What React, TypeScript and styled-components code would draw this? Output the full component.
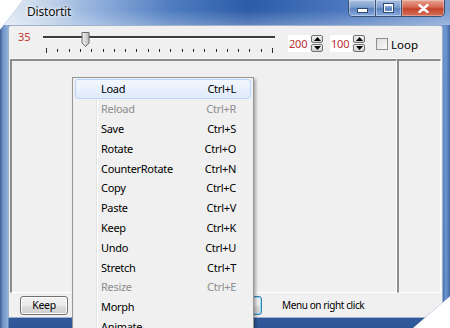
import React from 'react'
import styled, { createGlobalStyle } from 'styled-components'

const GlobalStyle = createGlobalStyle`
  html, body {
    margin: 0;
    padding: 0;
    background: #fff;
    overflow: hidden;
  }
  body {
    font-family: 'Noto Sans', 'Open Sans', sans-serif;
    font-size: 11px;
    color: #000;
  }
`

interface MenuEntry {
  label: string
  accel: string
  active?: boolean
  disabled?: boolean
}

const menu: MenuEntry[] = [
  { label: 'Load', accel: 'Ctrl+L', active: true },
  { label: 'Reload', accel: 'Ctrl+R', disabled: true },
  { label: 'Save', accel: 'Ctrl+S' },
  { label: 'Rotate', accel: 'Ctrl+O' },
  { label: 'CounterRotate', accel: 'Ctrl+N' },
  { label: 'Copy', accel: 'Ctrl+C' },
  { label: 'Paste', accel: 'Ctrl+V' },
  { label: 'Keep', accel: 'Ctrl+K' },
  { label: 'Undo', accel: 'Ctrl+U' },
  { label: 'Stretch', accel: 'Ctrl+T' },
  { label: 'Resize', accel: 'Ctrl+E', disabled: true },
  { label: 'Morph', accel: '' },
  { label: 'Animate', accel: '' },
]

function Slider({ value, max }: { value: number; max: number }) {
  const x0 = 6
  const x1 = 232
  const ticks = Array.from({ length: 21 }, (_, i) => x0 + ((x1 - x0) * i) / 20)
  const tx = x0 + ((x1 - x0) * value) / max
  return (
    <S.SliderSvg width="236" height="26" viewBox="0 0 236 26">
      <rect x="3" y="5" width="232" height="2" fill="#3c3c3c" />
      <rect x="3" y="7" width="232" height="1" fill="#ffffff" />
      {ticks.map((t, i) => (
        <rect
          key={i}
          x={Math.round(t)}
          y={i === 0 || i === 20 ? 17 : 18}
          width="1"
          height={i === 0 || i === 20 ? 5 : 3}
          fill="#2a2a2a"
        />
      ))}
      <defs>
        <linearGradient id="thumb" x1="0" y1="0" x2="1" y2="0">
          <stop offset="0" stopColor="#f4f4f4" />
          <stop offset="1" stopColor="#b9b9b9" />
        </linearGradient>
      </defs>
      <path
        d={`M${tx - 3.5} 1.5 H${tx + 3.5} V12 L${tx} 15.5 L${tx - 3.5} 12 Z`}
        fill="url(#thumb)"
        stroke="#6a6a6a"
        strokeWidth="1"
      />
    </S.SliderSvg>
  )
}

function Spin({ value, first }: { value: number; first?: boolean }) {
  return (
    <S.Spin $first={first}>
      <S.SpinField>{value}</S.SpinField>
      <S.SpinArrows>
        <S.SpinBtn>
          <svg width="7" height="4" viewBox="0 0 7 4">
            <path d="M0 4 L3.5 0 L7 4 Z" fill="#000" />
          </svg>
        </S.SpinBtn>
        <S.SpinBtn>
          <svg width="7" height="4" viewBox="0 0 7 4">
            <path d="M0 0 L3.5 4 L7 0 Z" fill="#000" />
          </svg>
        </S.SpinBtn>
      </S.SpinArrows>
    </S.Spin>
  )
}

export default function App() {
  return (
    <>
      <GlobalStyle />
      <S.Frame>
        <S.TitleBar>
          <S.Title>Distortit</S.Title>
          <S.Caption>
            <S.CapBtn $w={26}>
              <S.MinGlyph />
            </S.CapBtn>
            <S.CapBtn $w={25}>
              <S.MaxGlyph />
            </S.CapBtn>
            <S.CloseBtn>
              <svg width="11" height="9" viewBox="0 0 11 9">
                <path
                  d="M1.5 1 L9.5 8 M9.5 1 L1.5 8"
                  stroke="#fff"
                  strokeWidth="2.4"
                  strokeLinecap="round"
                />
              </svg>
            </S.CloseBtn>
          </S.Caption>
        </S.TitleBar>

        <S.Client>
          <S.Toolbar>
            <S.Value>35</S.Value>
            <Slider value={35} max={200} />
            <Spin value={200} first />
            <Spin value={100} />
            <S.Check />
            <S.CheckLabel>Loop</S.CheckLabel>
          </S.Toolbar>

          <S.Panels>
            <S.Panel $grow />
            <S.Panel />
          </S.Panels>

          <S.BottomBar>
            <S.Button $w={48}>Keep</S.Button>
            <S.Button $w={62} $focus $ml={132} />
            <S.Hint>Menu on right click</S.Hint>
          </S.BottomBar>
        </S.Client>

        <S.Menu>
          {menu.map(m => (
            <S.Item key={m.label} $active={m.active} $disabled={m.disabled}>
              <span>{m.label}</span>
              <span>{m.accel}</span>
            </S.Item>
          ))}
        </S.Menu>
      </S.Frame>
    </>
  )
}

const S = {
  Frame: styled.div`
    position: relative;
    width: 450px;
    height: 328px;
    box-sizing: border-box;
    display: flex;
    flex-direction: column;
    background:
      linear-gradient(to right, #3e5f8f 0, #6f95c9 3px, #8fb0da 8px, transparent 9px),
      linear-gradient(to left, #3f67a3 0, #6d96cf 4px, transparent 8px),
      linear-gradient(to bottom, #6e94cb 0, #4f7bbd 60%, #2f5798 100%);
    clip-path: polygon(23px 0, 100% 0, 100% 296px, 413px 100%, 0 100%, 0 30px);
  `,

  TitleBar: styled.div`
    height: 25px;
    flex: none;
    display: flex;
    align-items: flex-start;
    background:
      linear-gradient(to bottom, rgba(255, 255, 255, 0) 40%, rgba(255, 255, 255, 0.25) 100%),
      linear-gradient(100deg, #e6edf6 0%, #c3d4ea 10%, #8eaedb 22%, #4f7cc0 38%, #2c5ba7 55%, #4a76bd 75%, #7da0d2 100%);
  `,

  Title: styled.div`
    margin: 4px 0 0 27px;
    font-size: 12px;
    line-height: 15px;
    letter-spacing: -0.2px;
    color: #111;
    text-shadow: 0 0 6px #fff, 0 0 3px #fff;
  `,

  Caption: styled.div`
    margin-left: auto;
    margin-right: 5px;
    display: flex;
    height: 16px;
    border: 1px solid #3a5274;
    border-top: none;
    border-radius: 0 0 5px 5px;
    overflow: hidden;
  `,

  CapBtn: styled.div<{ $w: number }>`
    width: ${p => p.$w}px;
    display: flex;
    align-items: center;
    justify-content: center;
    border-right: 1px solid #3a5274;
    background: linear-gradient(to bottom, #a9c0e0 0%, #7e9ed0 45%, #5d82bd 55%, #8aaee0 100%);
    box-shadow: inset 0 0 0 1px rgba(255, 255, 255, 0.35);
  `,

  MinGlyph: styled.div`
    width: 9px;
    height: 3px;
    margin-top: 4px;
    background: #fff;
    border: 1px solid #2f4a72;
  `,

  MaxGlyph: styled.div`
    width: 7px;
    height: 5px;
    border: 1px solid #fff;
    border-top-width: 2px;
    outline: 1px solid #2f4a72;
  `,

  CloseBtn: styled.div`
    width: 42px;
    display: flex;
    align-items: center;
    justify-content: center;
    background: linear-gradient(to bottom, #e8a493 0%, #d5664f 45%, #c3432b 55%, #d5715a 100%);
    box-shadow: inset 0 0 0 1px rgba(255, 255, 255, 0.3);
  `,

  Client: styled.div`
    flex: none;
    height: 293px;
    margin: 0 7px 0 8px;
    display: flex;
    flex-direction: column;
    background: #f0f0f0;
    border: 1px solid #9fb2cc;
    box-sizing: border-box;
    border-radius: 3px 3px 0 0;
  `,

  Toolbar: styled.div`
    height: 32px;
    flex: none;
    display: flex;
    align-items: center;
    padding-left: 9px;
    border-bottom: 1px solid #fbfbfb;
  `,

  Value: styled.div`
    width: 14px;
    margin-top: -11px;
    color: #c8373a;
    font-size: 11px;
  `,

  SliderSvg: styled.svg`
    display: block;
    margin: 3px 0 0 8px;
  `,

  Spin: styled.div<{ $first?: boolean }>`
    display: flex;
    align-items: center;
    margin-left: ${p => (p.$first ? 12 : 7)}px;
    margin-top: 2px;
  `,

  SpinField: styled.div`
    width: 22px;
    height: 17px;
    line-height: 17px;
    background: #fff;
    color: #b5302f;
    font-size: 11px;
    letter-spacing: -0.2px;
    text-align: left;
    padding-left: 1px;
    box-sizing: border-box;
  `,

  SpinArrows: styled.div`
    display: flex;
    flex-direction: column;
    gap: 1px;
    margin-left: 1px;
  `,

  SpinBtn: styled.div`
    width: 12px;
    height: 8px;
    box-sizing: border-box;
    display: flex;
    align-items: center;
    justify-content: center;
    border: 1px solid #707070;
    border-radius: 2px;
    background: linear-gradient(to bottom, #f2f2f2, #cfcfcf);
  `,

  Check: styled.div`
    width: 12px;
    height: 12px;
    margin: 4px 0 0 11px;
    box-sizing: border-box;
    border: 1px solid #8e8f8f;
    background: linear-gradient(135deg, #dcdcdc, #fbfbfb);
  `,

  CheckLabel: styled.div`
    margin: 4px 0 0 3px;
    font-size: 11.5px;
  `,

  Panels: styled.div`
    height: 234px;
    flex: none;
    display: flex;
    padding: 0 1px 0 1px;
  `,

  Panel: styled.div<{ $grow?: boolean }>`
    ${p => (p.$grow ? 'flex: 1;' : 'width: 44px;')}
    box-sizing: border-box;
    border-top: 2px solid #8c8c8c;
    border-left: 2px solid #8c8c8c;
    border-right: 1px solid #fff;
    border-bottom: 1px solid #fff;
  `,

  BottomBar: styled.div`
    flex: 1;
    display: flex;
    align-items: center;
    padding-left: 11px;
  `,

  Button: styled.div<{ $w: number; $focus?: boolean; $ml?: number }>`
    width: ${p => p.$w}px;
    height: 19px;
    margin-left: ${p => p.$ml ?? 0}px;
    box-sizing: border-box;
    display: flex;
    align-items: center;
    justify-content: center;
    font-size: 10.5px;
    letter-spacing: -0.3px;
    border: 1px solid ${p => (p.$focus ? '#3c7fb1' : '#707070')};
    border-radius: 3px;
    background: linear-gradient(to bottom, #f2f2f2 0%, #ebebeb 50%, #dddddd 51%, #cfcfcf 100%);
    box-shadow: ${p => (p.$focus ? 'inset 0 0 0 1px #8fdcf5' : 'inset 0 0 0 1px #fcfcfc')};
  `,

  Hint: styled.div`
    margin-left: 20px;
    font-size: 10px;
    letter-spacing: -0.4px;
  `,

  Menu: styled.div`
    position: absolute;
    left: 72px;
    top: 77px;
    width: 182px;
    box-sizing: border-box;
    padding: 1px 2px;
    background:
      linear-gradient(to right, transparent 23px, #e2e3e3 23px, #e2e3e3 24px, #fff 24px, #fff 25px, transparent 25px),
      #f0f0f0;
    border: 1px solid #979797;
    box-shadow: 2px 2px 3px rgba(0, 0, 0, 0.3);
  `,

  Item: styled.div<{ $active?: boolean; $disabled?: boolean }>`
    height: 19.8px;
    box-sizing: border-box;
    display: flex;
    align-items: center;
    justify-content: space-between;
    padding: 0 14px 0 25px;
    font-size: 11px;
    letter-spacing: -0.3px;
    color: ${p => (p.$disabled ? '#8d8d8d' : '#000')};
    border: 1px solid ${p => (p.$active ? '#b8d6fb' : 'transparent')};
    border-radius: 3px;
    background: ${p =>
      p.$active ? 'linear-gradient(to bottom, #f2f7fe, #dfebfb)' : 'transparent'};
  `,
}
